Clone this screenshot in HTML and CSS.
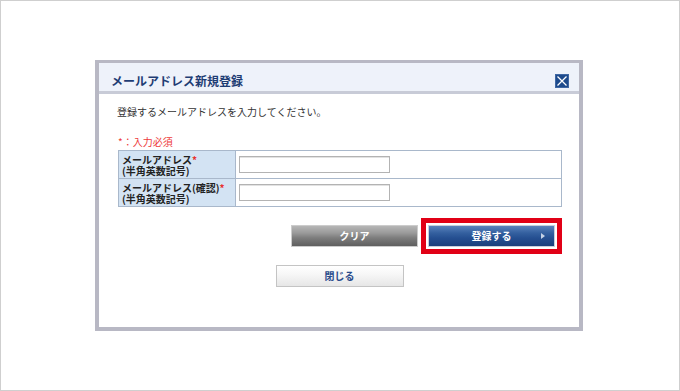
FILE: index.html
```html
<!DOCTYPE html>
<html lang="ja">
<head>
<meta charset="utf-8">
<title>メールアドレス新規登録</title>
<link rel="stylesheet" href="styles.css">
</head>
<body>
<div class="page">
  <div class="dialog">
    <div class="dialog-header">
      <h1 class="dialog-title">メールアドレス新規登録</h1>
      <svg class="close-icon" width="14" height="14" viewBox="0 0 14 14" aria-label="閉じる">
        <rect x="0.5" y="0.5" width="13" height="13" fill="#1d4a8c" stroke="#3f67a3" stroke-width="1"/>
        <path d="M2.5 2.5 L11.5 11.5 M11.5 2.5 L2.5 11.5" stroke="#ffffff" stroke-width="1.3" fill="none"/>
      </svg>
    </div>
    <div class="dialog-body">
      <p class="lead">登録するメールアドレスを入力してください。</p>
      <p class="req">*：入力必須</p>
      <table class="form-table">
        <tr>
          <th class="label-cell">メールアドレス<span class="star">*</span><br>(半角英数記号)</th>
          <td class="input-cell"><input class="text-input" type="text"></td>
        </tr>
        <tr>
          <th class="label-cell">メールアドレス(確認)<span class="star">*</span><br>(半角英数記号)</th>
          <td class="input-cell"><input class="text-input" type="text"></td>
        </tr>
      </table>
      <div class="actions">
        <button class="btn btn-gray" type="button">クリア</button>
        <div class="highlight">
          <button class="btn btn-blue" type="button">登録する</button>
        </div>
      </div>
      <div class="close-row">
        <button class="btn btn-light" type="button">閉じる</button>
      </div>
    </div>
  </div>
</div>
</body>
</html>
```
FILE: styles.css
```css
html, body {
  margin: 0;
  padding: 0;
  background: #ffffff;
}

body {
  font-family: "Noto Sans CJK JP", "Noto Sans", sans-serif;
  color: #333333;
}

.page {
  width: 680px;
  height: 391px;
  box-sizing: border-box;
  border: 1px solid #cfcfcf;
  padding-right: 2px;
  display: flex;
  align-items: center;
  justify-content: center;
  background: #ffffff;
}

.dialog {
  width: 488px;
  height: 271px;
  box-sizing: border-box;
  border-style: solid;
  border-color: #b8b8c4;
  border-width: 3px 4px 4px 4px;
  background: #ffffff;
  display: flex;
  flex-direction: column;
}

.dialog-header {
  height: 31px;
  box-sizing: border-box;
  padding: 8px 10px 0 12px;
  background: #eef2fa;
  border-bottom: 3px solid #c8cbd7;
  display: flex;
  align-items: center;
  justify-content: space-between;
}

.dialog-title {
  margin: 0;
  font-size: 12px;
  font-weight: bold;
  color: #1f3d74;
  line-height: 14px;
}

.close-icon {
  display: block;
}

.dialog-body {
  padding: 0 17px 0 19px;
  display: flex;
  flex-direction: column;
}

.lead {
  margin: 11px 0 0 -1px;
  font-size: 10px;
  line-height: 14px;
  color: #333333;
}

.req {
  margin: 17px 0 0 0;
  font-size: 10px;
  line-height: 12px;
  color: #ee3b3b;
}

.form-table {
  margin-top: 2px;
  width: 100%;
  border-collapse: collapse;
  border: 1px solid #a9b8cb;
}

.form-table tr {
  border-bottom: 1px solid #a9b8cb;
}

.label-cell {
  width: 113px;
  height: 27px;
  padding: 0 0 0 3px;
  background: #d3e3f3;
  border-right: 1px solid #a9b8cb;
  text-align: left;
  vertical-align: middle;
  font-size: 10px;
  line-height: 11px;
  font-weight: bold;
  color: #222222;
}

.star {
  color: #e8322f;
}

.input-cell {
  padding: 0 0 0 3px;
  vertical-align: middle;
  background: #ffffff;
}

.text-input {
  display: block;
  width: 151px;
  height: 17px;
  box-sizing: border-box;
  margin: 0;
  border: 1px solid #b3b3b3;
  box-shadow: inset 0 1px 0 #e2e2e2;
  background: #ffffff;
  padding: 0 2px;
}

.actions {
  margin-top: 11px;
  display: flex;
  justify-content: flex-end;
  align-items: center;
  gap: 3px;
}

.highlight {
  border: 5px solid #e10016;
  padding: 2px;
  background: #ffffff;
  display: flex;
}

.btn {
  width: 127px;
  height: 22px;
  box-sizing: border-box;
  margin: 0;
  padding: 0;
  font-family: "Noto Sans CJK JP", "Noto Sans", sans-serif;
  font-size: 10px;
  font-weight: bold;
  line-height: 20px;
  text-align: center;
  cursor: pointer;
  position: relative;
}

.btn-gray {
  color: #ffffff;
  border: 1px solid #cccccc;
  background: linear-gradient(to bottom, #b6b6b6 0%, #9a9a9a 35%, #7c7c7c 60%, #5f5f5f 100%);
}

.btn-blue {
  color: #ffffff;
  border: 1px solid #c9d0dc;
  background: linear-gradient(to bottom, #5a82bd 0%, #34609f 35%, #254f91 60%, #1a3f7c 100%);
}

.btn-blue::after {
  content: "";
  position: absolute;
  right: 9px;
  top: 7px;
  border-left: 4px solid #c5d2e6;
  border-top: 3px solid transparent;
  border-bottom: 3px solid transparent;
}

.close-row {
  margin-top: 11px;
  display: flex;
  justify-content: center;
  padding-right: 1px;
}

.btn-light {
  width: 128px;
  color: #2b4c8c;
  border: 1px solid #c4c4c4;
  background: linear-gradient(to bottom, #ffffff 0%, #f6f6f6 45%, #e6e6e6 100%);
}
```
